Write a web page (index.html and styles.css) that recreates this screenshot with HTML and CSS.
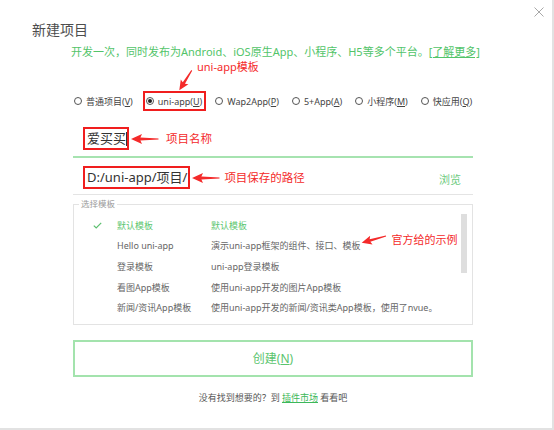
FILE: index.html
```html
<!DOCTYPE html>
<html lang="zh-CN">
<head>
    <meta charset="UTF-8">
    <meta name="viewport" content="width=device-width, initial-scale=1.0">
    <title>新建项目</title>
    <link rel="stylesheet" href="styles.css">
</head>
<body>
    <div class="dialog">
        <div class="dialog-head">
            <h1 class="dialog-title">新建项目</h1>
            <span class="dialog-close">
                <svg width="10" height="10" viewBox="0 0 10 10"><path d="M0.5 0.5L9.5 9.5M9.5 0.5L0.5 9.5" stroke="#a8a8a8" stroke-width="1"/></svg>
            </span>
        </div>

        <div class="dialog-body">
            <p class="intro">开发一次，同时发布为Android、iOS原生App、小程序、H5等多个平台。<a class="intro-link">[了解更多]</a></p>

            <!-- 标注：模板类型 -->
            <div class="note note-type">
                <svg class="arrow" width="20" height="26" viewBox="0 0 20 26"><path transform="translate(3.3 23.3) rotate(-58)" d="M0 0L10 -4.5L8.6 -1.3L23.5 -0.5L23.5 0.5L8.6 1.3L10 4.5Z"/></svg>
                <span class="note-text">uni-app模板</span>
            </div>

            <div class="types">
                <label class="type"><span class="radio"></span><span>普通项目(<u>V</u>)</span></label>
                <label class="type type-marked"><span class="radio radio-on"></span><span>uni-app(<u>U</u>)</span></label>
                <label class="type"><span class="radio"></span><span>Wap2App(<u>P</u>)</span></label>
                <label class="type"><span class="radio"></span><span>5+App(<u>A</u>)</span></label>
                <label class="type"><span class="radio"></span><span>小程序(<u>M</u>)</span></label>
                <label class="type"><span class="radio"></span><span>快应用(<u>Q</u>)</span></label>
            </div>

            <div class="field field-name">
                <span class="mark mark-name">爱买买<i class="caret"></i></span>
                <svg class="arrow" width="28" height="12" viewBox="0 0 28 12"><path transform="translate(0 6)" d="M0 0L11 -5L9.4 -1.4L27.5 -0.5L27.5 0.5L9.4 1.4L11 5Z"/></svg>
                <span class="note-text">项目名称</span>
            </div>

            <div class="field field-path">
                <span class="mark mark-path">D:/uni-app/项目/</span>
                <svg class="arrow" width="28" height="12" viewBox="0 0 28 12"><path transform="translate(0 6)" d="M0 0L11 -5L9.4 -1.4L27.5 -0.5L27.5 0.5L9.4 1.4L11 5Z"/></svg>
                <span class="note-text">项目保存的路径</span>
                <span class="browse">浏览</span>
            </div>

            <fieldset class="templates">
                <legend>选择模板</legend>
                <div class="tpl-wrap">
                    <div class="tpl-list">
                        <div class="tpl-row is-active">
                            <span class="tpl-check"><svg width="9" height="7" viewBox="0 0 9 7"><path d="M0.8 3.6L3.2 6L8.2 0.8" fill="none" stroke="#5bbf6e" stroke-width="1.2"/></svg></span>
                            <span class="tpl-name">默认模板</span>
                            <span class="tpl-desc">默认模板</span>
                        </div>
                        <div class="tpl-row">
                            <span class="tpl-check"></span>
                            <span class="tpl-name">Hello uni-app</span>
                            <span class="tpl-desc"><span>演示uni-app框架的组件、接口、模板</span>
                                <span class="note note-tpl">
                                    <svg class="arrow" width="26" height="11" viewBox="0 0 26 11"><path transform="translate(0.7 8.7) rotate(-15.4)" d="M0 0L10 -4.5L8.6 -1.3L25.2 -0.5L25.2 0.5L8.6 1.3L10 4.5Z"/></svg>
                                    <span class="note-text">官方给的示例</span>
                                </span>
                            </span>
                        </div>
                        <div class="tpl-row">
                            <span class="tpl-check"></span>
                            <span class="tpl-name">登录模板</span>
                            <span class="tpl-desc">uni-app登录模板</span>
                        </div>
                        <div class="tpl-row">
                            <span class="tpl-check"></span>
                            <span class="tpl-name">看图App模板</span>
                            <span class="tpl-desc">使用uni-app开发的图片App模板</span>
                        </div>
                        <div class="tpl-row">
                            <span class="tpl-check"></span>
                            <span class="tpl-name">新闻/资讯App模板</span>
                            <span class="tpl-desc">使用uni-app开发的新闻/资讯类App模板，使用了nvue。</span>
                        </div>
                    </div>
                    <div class="tpl-scroll"></div>
                </div>
            </fieldset>

            <button class="create">创建(<u>N</u>)</button>

            <p class="market">没有找到想要的？到 <a class="market-link">插件市场</a> 看看吧</p>
        </div>
    </div>
</body>
</html>
```

FILE: styles.css
```css
* {
    box-sizing: border-box;
}
body {
    margin: 0;
    background: #fff;
    font-family: "Noto Sans", "Noto Sans CJK SC", sans-serif;
    color: #444;
}
.dialog {
    width: 554px;
    height: 430px;
    background: #fff;
    border-right: 2px solid #e2e2e2;
    border-bottom: 2px solid #e2e2e2;
}
.dialog-head {
    display: flex;
    justify-content: space-between;
    align-items: flex-start;
    padding: 0 8px 0 32px;
}
.dialog-title {
    margin: 20px 0 0;
    font-size: 14px;
    line-height: 19px;
    font-weight: normal;
    color: #4d4d4d;
}
.dialog-close {
    display: flex;
    margin-top: 7px;
}
.dialog-body {
    padding: 0 79px 0 73px;
}
.intro {
    margin: 5px 0 0 -2px;
    font-size: 11px;
    line-height: 16px;
    color: #52c469;
    white-space: nowrap;
}
.intro-link {
    text-decoration: underline;
}

/* 红色标注 */
.arrow {
    display: block;
    flex: none;
    fill: #f42a2a;
}
.note-text {
    font-size: 11.5px;
    line-height: 14px;
    color: #f42a2a;
    white-space: nowrap;
}
.note-type {
    display: flex;
    align-items: flex-start;
    height: 31px;
    padding-left: 103px;
}
.note-type .arrow {
    margin-top: 7px;
}
.note-type .note-text {
    margin-left: 1px;
    font-size: 11px;
}

/* 项目类型 */
.types {
    display: flex;
    gap: 6px;
    margin-left: -2px;
    height: 20px;
}
.type {
    display: flex;
    align-items: center;
    gap: 4px;
    padding: 0 2px 0 1px;
    border: 2px solid transparent;
    font-size: 9px;
    color: #444;
    white-space: nowrap;
}
.type-marked {
    border-color: #f01e1e;
}
.radio {
    width: 8px;
    height: 8px;
    border: 1px solid #555;
    border-radius: 50%;
    display: flex;
    align-items: center;
    justify-content: center;
}
.radio-on::after {
    content: "";
    width: 4px;
    height: 4px;
    border-radius: 50%;
    background: #222;
}

/* 输入项 */
.field {
    display: flex;
    align-items: center;
    padding-left: 10px;
}
.field-name {
    padding-top: 16px;
    padding-bottom: 6px;
    border-bottom: 2px solid #a6e3b0;
}
.field-path {
    padding-top: 8px;
    padding-bottom: 5px;
    border-bottom: 1px solid #e4e4e4;
}
.mark {
    display: flex;
    align-items: center;
    border: 2px solid #f01e1e;
    padding-left: 2px;
    font-size: 13px;
    line-height: 19px;
    color: #333;
}
.mark-path {
    padding-right: 1px;
}
.caret {
    width: 1px;
    height: 14px;
    background: #333;
}
.field .arrow {
    margin-left: 2px;
}
.field-name .note-text {
    margin-left: 7px;
}
.field-path .note-text {
    margin-left: 4px;
}
.browse {
    margin-left: auto;
    margin-right: 12px;
    align-self: flex-end;
    margin-bottom: 2px;
    font-size: 11px;
    line-height: 14px;
    color: #6ccb7e;
}

/* 模板列表 */
.templates {
    margin: 4px 0 0;
    padding: 0;
    border: 1px solid #e3e3e3;
}
.templates legend {
    margin-left: 5px;
    padding: 0 2px;
    font-size: 8.5px;
    line-height: 10px;
    color: #9a9a9a;
}
.tpl-wrap {
    display: flex;
}
.tpl-list {
    flex: 1;
    padding: 6px 0 6px 19px;
}
.tpl-row {
    display: grid;
    grid-template-columns: 24px 94px 1fr;
    align-items: center;
    height: 20.6px;
    font-size: 9px;
    color: #666;
    white-space: nowrap;
}
.tpl-row.is-active {
    color: #5cc66f;
}
.tpl-check {
    display: flex;
}
.tpl-desc {
    display: flex;
    align-items: center;
}
.note-tpl {
    display: flex;
    align-items: center;
    position: relative;
    top: -6px;
    margin-left: 1px;
}
.note-tpl .note-text {
    margin-left: 4px;
    font-size: 11px;
}
.tpl-scroll {
    width: 6px;
    height: 59px;
    margin: 5px 5px 0 0;
    background: #dedede;
}

/* 底部 */
.create {
    display: block;
    width: 100%;
    height: 37px;
    margin-top: 15px;
    border: 2px solid #a3e3ad;
    background: #fff;
    font-family: inherit;
    font-size: 12px;
    color: #5ac46e;
}
.market {
    margin: 14px 0 0;
    font-size: 9px;
    line-height: 14px;
    text-align: center;
    color: #555;
}
.market-link {
    color: #3cb85a;
    text-decoration: underline;
}
```
